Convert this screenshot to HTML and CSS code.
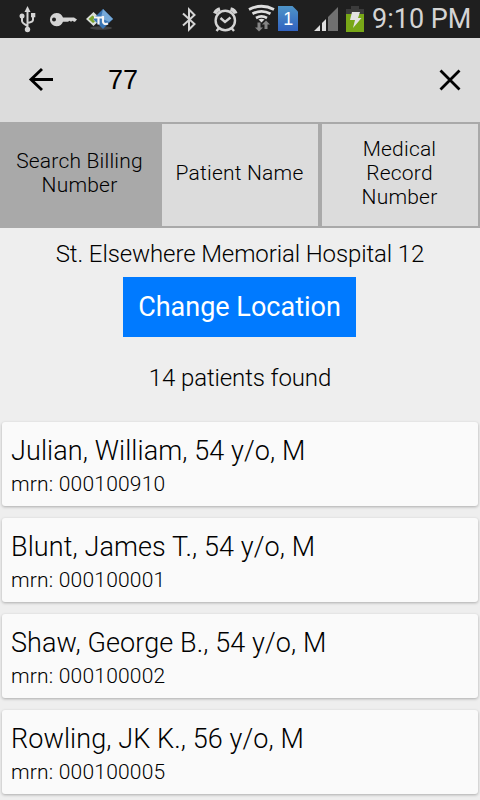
FILE: index.html
```html
<!DOCTYPE html>
<html lang="en">
<head>
<meta charset="utf-8">
<title>Patient Search</title>
<link rel="stylesheet" href="styles.css">
</head>
<body>
<div class="status">
  <svg class="icons-left" width="130" height="38" viewBox="0 0 130 38">
    <g stroke="#d4d4d4" stroke-width="2" fill="none">
      <path d="M27.500 10v19M22 17v4q0 2 5.500 5M33 16v4q0 2-5.500 3"/>
    </g>
    <g fill="#d4d4d4">
      <path d="M24.500 12l3-6 3 6z"/><circle cx="22" cy="16" r="2.500"/><path d="M31 13h4.300v4.300H31z"/><circle cx="27.500" cy="29.500" r="2.700"/>
      <path fill-rule="evenodd" d="M56.500 13c3.500 0 5.500 2 6.500 4.500h11l3 2-2 2.200h-1l-1.500-1-1.500 1-1.500-1-1.500 1h-5c-1 2.500-3 4.500-6.500 4.500a6.600 6.600 0 1 1 0-13.200zm-2.500 4.600a2 2 0 1 0 0 4 2 2 0 0 0 0-4z"/>
    </g>
    <ellipse cx="101" cy="28" rx="11" ry="1.800" fill="#444"/>
    <path d="M86 19l7.500-7 7.500 7-7.500 7z" fill="#d9ddd8"/>
    <path d="M103 9l10 10-10 10-10-10z" fill="#3975b4"/>
    <path d="M103 9l10 10-4 3-8-4z" fill="#76a9d8"/>
    <path d="M88.500 19l4-3.500 2.500 2-2 2 2 2-2 1.500z" fill="#7ba52c"/>
    <path d="M94 17.500h9M98.500 17.500v7M103 16v6q1 3 5 1.500" stroke="#f4f4f4" stroke-width="2.200" fill="none"/>
  </svg>
  <svg class="icons-right" width="200" height="38" viewBox="170 0 200 38">
    <path d="M183 13.500l11.500 10.500-5.500 5.500v-20l5.500 5.500-11.500 10.500" fill="none" stroke="#d4d4d4" stroke-width="2"/>
    <g fill="none" stroke="#d4d4d4" stroke-width="2.400">
      <circle cx="225.300" cy="20.500" r="9.700"/><path d="M220.500 18l4.500 4 5.500-4.500M219 28l-2.500 3M231.500 28l2.500 3"/>
      <path d="M214.800 13.500q1.500-3.500 5.200-4.500M230.500 9q4 1 5.200 4.500" stroke-width="3.800"/>
    </g>
    <g fill="none" stroke="#dedede" stroke-width="2.800">
      <path d="M249 9.500q12.500-6.500 25 0M252.500 13.800q9-5 18 0M256 17.900q5.500-3 11 0"/>
    </g>
    <path d="M258.500 19.500q3-1.500 6 0l-3 3z" fill="#dedede"/>
    <path d="M257.500 22.500h3v5h2.500l-4 4-4-4h2.500zM264.500 29v-4.500H262l4-4 4 4h-2.500V29z" fill="#858585"/>
    <defs><linearGradient id="sim" x2="0" y2="1"><stop stop-color="#4e94c7"/><stop offset="1" stop-color="#3162c0"/></linearGradient></defs>
    <path d="M278 6h14.500l5.500 5.500V31h-20z" fill="url(#sim)"/>
    <text x="283.200" y="25" class="sim-number">1</text>
    <path d="M338 7v24h-10V17z" fill="#707070"/>
    <path d="M314 31l6-6v6zM322 23l4-4v12h-4z" fill="#dedede"/>
    <path d="M351 6h8v3h5v5.500h-18V9h5z" fill="#3b3b3b"/>
    <path d="M346 14h18v18h-18z" fill="#78a717"/>
    <path d="M352 12h8l-2 6h3.500l-8.500 10 2-8H350z" fill="#e2e2e2"/>
  </svg>
  <span class="clock">9:10 PM</span>
</div>
<header class="search">
  <svg width="26" height="26" viewBox="0 0 26 26" class="back"><path d="M25 12.500H4M14 2L3 12.500 14 23" fill="none" stroke="#000" stroke-width="2.900"/></svg>
  <span class="query">77</span>
  <svg width="22" height="22" viewBox="0 0 22 22"><path d="M1.500 1.500l19 19M20.500 1.500l-19 19" stroke="#000" stroke-width="2.800"/></svg>
</header>
<nav class="tabs">
  <div class="tab active"><span>Search Billing<br>Number</span></div>
  <div class="tab"><span>Patient Name</span></div>
  <div class="tab"><span>Medical<br>Record<br>Number</span></div>
</nav>
<main>
  <p class="place"><span>St. Elsewhere Memorial Hospital 12</span></p>
  <button class="change"><span>Change Location</span></button>
  <p class="count"><span>14 patients found</span></p>
  <section class="list">
    <article class="card"><h2>Julian, William, 54 y/o, M</h2><p>mrn: 000100910</p></article>
    <article class="card"><h2>Blunt, James T., 54 y/o, M</h2><p>mrn: 000100001</p></article>
    <article class="card"><h2>Shaw, George B., 54 y/o, M</h2><p>mrn: 000100002</p></article>
    <article class="card"><h2>Rowling, JK K., 56 y/o, M</h2><p>mrn: 000100005</p></article>
  </section>
</main>
</body>
</html>
```
FILE: styles.css
```css
* { box-sizing: border-box; margin: 0; padding: 0; }
body { width: 480px; height: 800px; overflow: hidden; background: #eee; color: #000; font-family: Roboto, sans-serif; font-weight: 300; }
svg { display: block; flex: none; }
.status { display: flex; height: 38px; background: #1f1f1f; }
.icons-right { margin-left: 40px; }
.clock { margin-left: 2px; font-size: 27px; font-weight: 400; line-height: 38px; color: #d4d4d4; white-space: nowrap; }
.sim-number { font-family: "Liberation Sans", sans-serif; font-size: 18px; font-weight: 400; fill: #fff; }
.search { display: flex; align-items: center; height: 84px; padding: 0 19px 0 28px; background: #dcdcdc; }
.query { flex: 1; margin-left: 54px; font: 400 27px "Liberation Sans", sans-serif; }
.tabs { display: grid; grid-template-columns: repeat(3, 160px); height: 106px; background: #a9a9a9; }
.tab { display: flex; align-items: center; justify-content: center; border: 2px solid #a9a9a9; background: #dcdcdc; font-size: 21px; line-height: 24px; text-align: center; padding: 0 1px 4px 0; letter-spacing: .2px; white-space: nowrap; }
.tab.active { background: #a9a9a9; }
main { display: flex; flex-direction: column; align-items: center; }
.place, .count { font-size: 24px; line-height: 28px; letter-spacing: -.11px; white-space: nowrap; }
.place { margin-top: 12px; }
.change { width: 233px; height: 60px; margin: 9px 1px 0 0; border: 0; background: #007aff; color: #fff; font: 400 27px/60px Roboto, sans-serif; white-space: nowrap; }
.count { margin-top: 27px; }
.list { display: flex; flex-direction: column; gap: 12px; width: 476px; margin-top: 30px; }
.card { height: 84px; padding: 12px 9px; border-radius: 3px; background: #fafafa; box-shadow: 0 1px 3px rgba(0, 0, 0, .28); }
.card h2 { font-size: 27px; font-weight: 300; line-height: 34px; letter-spacing: .1px; }
.card p { font-size: 21px; line-height: 28px; margin-top: 2px; letter-spacing: .2px; }
```
